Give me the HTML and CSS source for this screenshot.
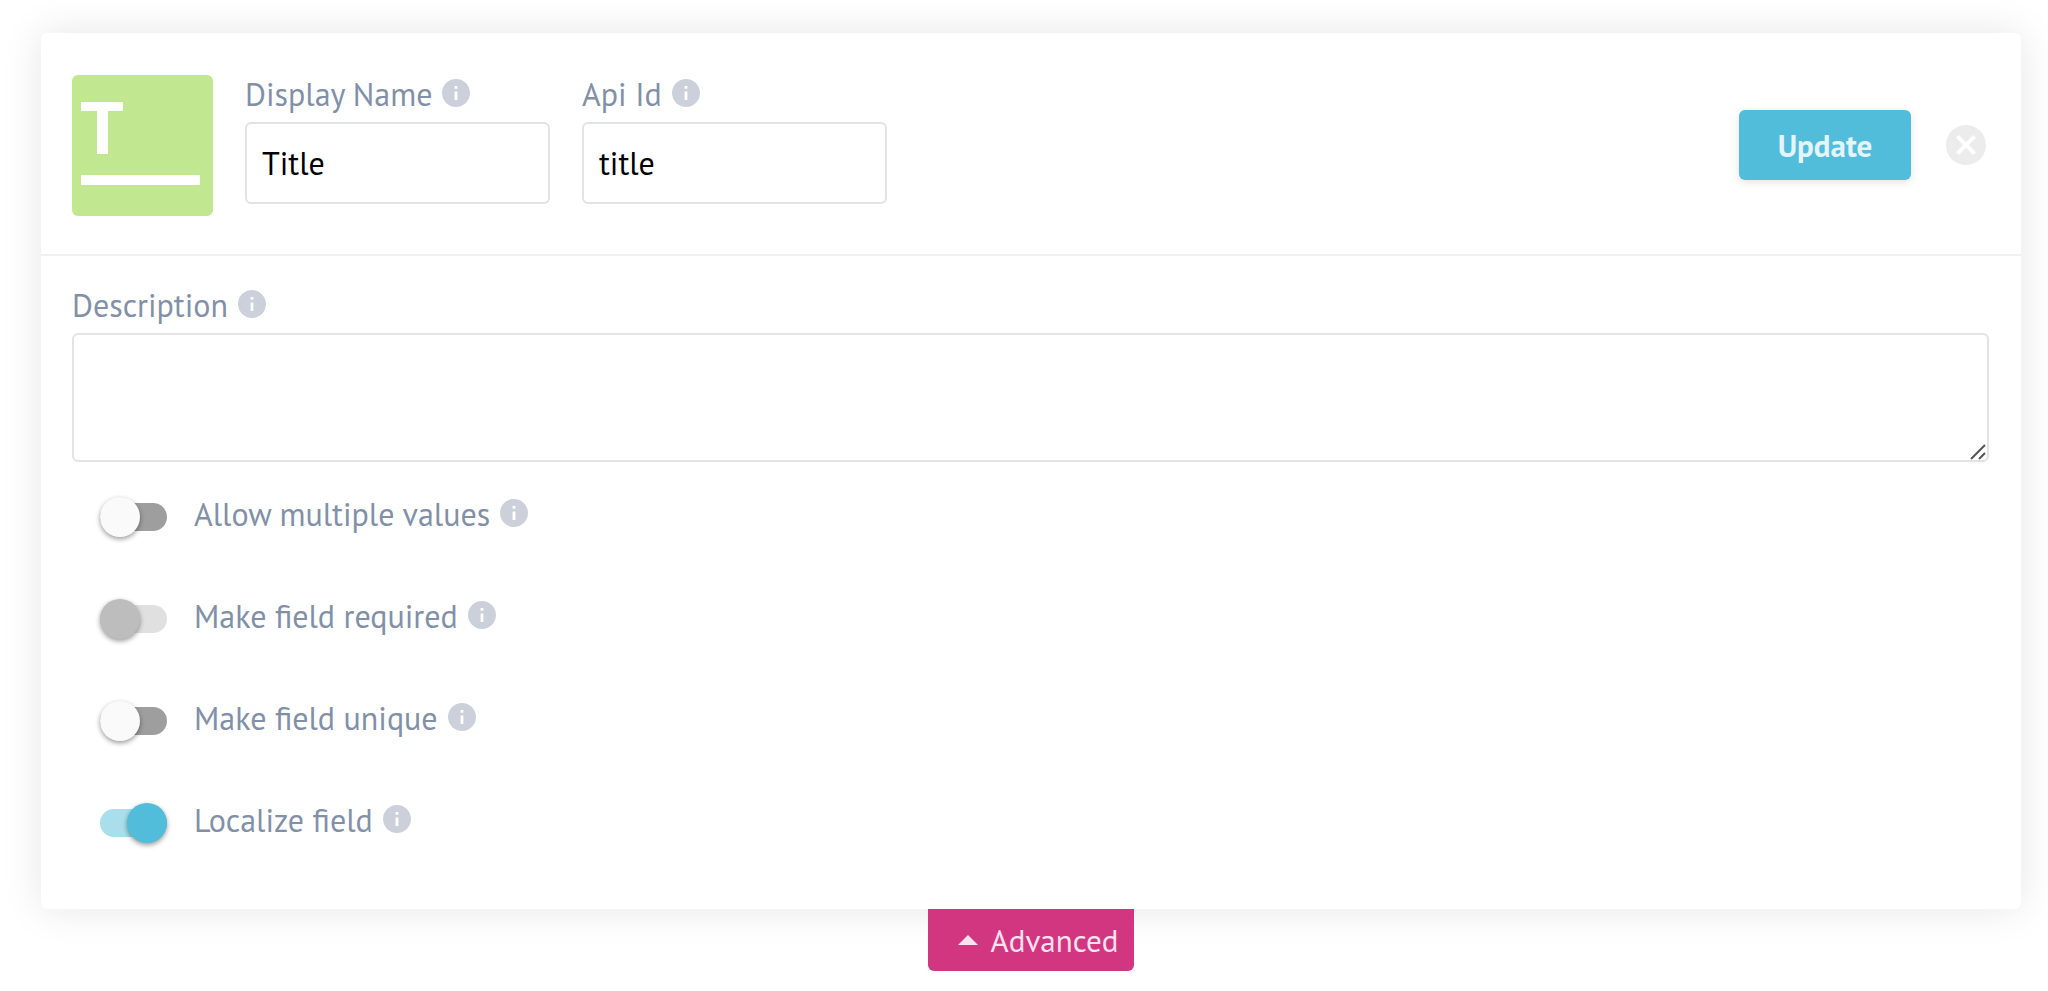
FILE: index.html
```html
<!DOCTYPE html>
<html lang="en">
<head>
    <meta charset="UTF-8">
    <meta name="viewport" content="width=device-width, initial-scale=1.0">
    <title>Edit field</title>
    <link rel="stylesheet" href="styles.css">
</head>
<body>
    <svg class="sprite" aria-hidden="true">
        <symbol id="info" viewBox="2 2 20 20">
            <path d="M12 2C6.48 2 2 6.48 2 12s4.48 10 10 10 10-4.48 10-10S17.52 2 12 2zm1 15h-2v-6h2v6zm0-8h-2V7h2v2z"/>
        </symbol>
    </svg>

    <form class="card">
        <div class="card-header">
            <svg class="field-type" viewBox="0 0 141 141" aria-hidden="true">
                <path d="M9 27h42v9H36v43H25V36H9zM9 100h119v10H9z"/>
            </svg>
            <div class="field">
                <div class="field-label">
                    <label for="displayName">Display Name</label>
                    <svg class="info"><use href="#info"/></svg>
                </div>
                <input class="text-input" type="text" id="displayName" value="Title">
            </div>
            <div class="field">
                <div class="field-label">
                    <label for="apiId">Api Id</label>
                    <svg class="info"><use href="#info"/></svg>
                </div>
                <input class="text-input" type="text" id="apiId" value="title">
            </div>
            <div class="actions">
                <button class="update" type="submit">Update</button>
                <button class="close" type="button" aria-label="Close">
                    <svg viewBox="0 0 24 24"><path d="M12 2C6.47 2 2 6.47 2 12s4.47 10 10 10 10-4.47 10-10S17.53 2 12 2zm5 13.59L15.59 17 12 13.41 8.41 17 7 15.59 10.59 12 7 8.41 8.41 7 12 10.59 15.59 7 17 8.41 13.41 12 17 15.59z"/></svg>
                </button>
            </div>
        </div>

        <div class="card-body">
            <div class="field-label">
                <label for="description">Description</label>
                <svg class="info"><use href="#info"/></svg>
            </div>
            <div class="textarea-wrap">
                <textarea class="textarea" id="description"></textarea>
                <svg class="resizer" viewBox="0 0 16 16" aria-hidden="true"><path d="M1 15L15 1M9 15l6-6"/></svg>
            </div>

            <div class="options">
                <div class="option">
                    <input class="toggle" type="checkbox" role="switch" id="multiple">
                    <label for="multiple">Allow multiple values</label>
                    <svg class="info"><use href="#info"/></svg>
                </div>
                <div class="option">
                    <input class="toggle" type="checkbox" role="switch" id="required" disabled>
                    <label for="required">Make field required</label>
                    <svg class="info"><use href="#info"/></svg>
                </div>
                <div class="option">
                    <input class="toggle" type="checkbox" role="switch" id="unique">
                    <label for="unique">Make field unique</label>
                    <svg class="info"><use href="#info"/></svg>
                </div>
                <div class="option">
                    <input class="toggle" type="checkbox" role="switch" id="localize" checked>
                    <label for="localize">Localize field</label>
                    <svg class="info"><use href="#info"/></svg>
                </div>
            </div>
        </div>
    </form>

    <div class="advanced-row">
        <button class="advanced" type="button">
            <svg class="arrow" viewBox="0 0 20 10" aria-hidden="true"><path d="M0 10L10 0l10 10z"/></svg>
            Advanced
        </button>
    </div>
</body>
</html>
```
FILE: styles.css
```css
* {
    box-sizing: border-box;
}
body {
    margin: 0;
    padding: 33px 27px 20px 41px;
    background-color: #fff;
    color: #8190a7;
    font-family: "PT Sans", "Noto Sans", sans-serif;
    font-size: 32px;
    line-height: 40px;
}
button, input, textarea {
    font-family: inherit;
    font-size: inherit;
}
button {
    border: none;
    padding: 0;
    cursor: pointer;
}
svg {
    display: block;
}
.sprite {
    display: none;
}
.card {
    background-color: #fff;
    border-radius: 6px;
    box-shadow: 0 0 40px rgba(0, 0, 0, 0.1);
}
.card-header {
    display: flex;
    align-items: center;
    gap: 32px;
    padding: 41px 31px 38px;
    border-bottom: 2px solid #f0f1f3;
}
.field-type {
    width: 141px;
    height: 141px;
    border-radius: 6px;
    background-color: #c1e791;
    fill: #fff;
}
.field {
    width: 305px;
    padding-bottom: 12px;
}
.field-label {
    display: flex;
    align-items: center;
    gap: 10px;
    height: 48px;
    padding-bottom: 8px;
}
.info {
    width: 28px;
    height: 28px;
    margin-bottom: 3px;
    fill: #cbd0da;
}
.text-input {
    display: block;
    width: 100%;
    height: 82px;
    padding: 0 15px;
    border: 2px solid #e3e3e3;
    border-radius: 6px;
    background-color: #fff;
    color: #000;
}
.actions {
    display: flex;
    align-items: center;
    gap: 31px;
    margin-left: auto;
}
.update {
    width: 172px;
    height: 70px;
    border-radius: 6px;
    background-color: #52bdda;
    box-shadow: 0 2px 8px rgba(0, 0, 0, 0.12);
    color: #e4f5fa;
    font-size: 31px;
    font-weight: bold;
}
.close {
    width: 48px;
    height: 48px;
    background: none;
    fill: #ececec;
}
.card-body {
    padding: 29px 32px 39px 31px;
}
.textarea-wrap {
    position: relative;
}
.textarea {
    display: block;
    width: 100%;
    height: 129px;
    padding: 16px;
    border: 2px solid #e3e3e3;
    border-radius: 6px;
    background-color: #fff;
    color: #000;
    resize: none;
}
.resizer {
    position: absolute;
    right: 3px;
    bottom: 2px;
    width: 16px;
    height: 16px;
    stroke: #555;
    stroke-width: 2;
    fill: none;
}
.options {
    display: grid;
    gap: 46px;
    padding: 24px 28px 22px;
}
.option {
    display: flex;
    align-items: center;
    gap: 10px;
    height: 56px;
}
.toggle {
    appearance: none;
    display: flex;
    align-items: center;
    width: 67px;
    height: 28px;
    margin: 5px 17px 0 0;
    border-radius: 14px;
    background-color: #9e9e9e;
}
.toggle::before {
    content: "";
    width: 40px;
    height: 40px;
    flex-shrink: 0;
    border-radius: 50%;
    background-color: #fafafa;
    box-shadow: 0 2px 5px rgba(0, 0, 0, 0.4);
}
.toggle:disabled {
    background-color: #e0e0e0;
}
.toggle:disabled::before {
    background-color: #bdbdbd;
}
.toggle:checked {
    justify-content: flex-end;
    background-color: #a9dfec;
}
.toggle:checked::before {
    background-color: #52bdda;
}
.advanced-row {
    display: flex;
    justify-content: center;
}
.advanced {
    position: relative;
    display: flex;
    align-items: center;
    gap: 13px;
    height: 62px;
    padding: 0 16px 0 30px;
    border-radius: 0 0 6px 6px;
    background-color: #d23681;
    color: #fae3ee;
    font-size: 31px;
}
.arrow {
    width: 20px;
    height: 10px;
    fill: #fae3ee;
}
```
